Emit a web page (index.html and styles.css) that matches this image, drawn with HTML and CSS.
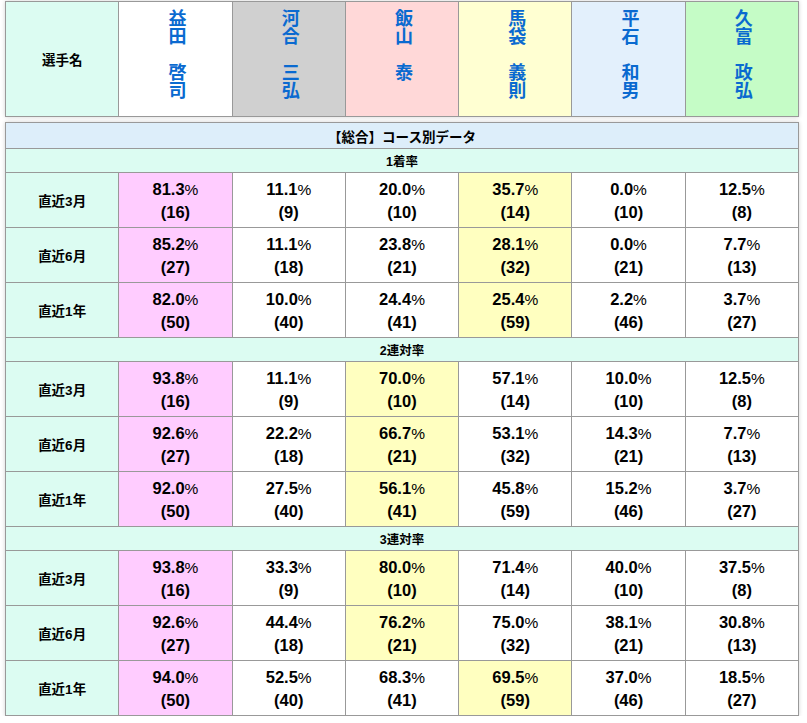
FILE: index.html
```html
<!DOCTYPE html>
<html lang="ja">
<head>
<meta charset="utf-8">
<title>コース別データ</title>
<link rel="stylesheet" href="styles.css">
</head>
<body>
<table class="players">
  <tr>
    <th class="label">選手名</th>
    <td class="name c-white"><a>益田　啓司</a></td>
    <td class="name c-gray"><a>河合　三弘</a></td>
    <td class="name c-pink"><a>飯山　泰</a></td>
    <td class="name c-yellow"><a>馬袋　義則</a></td>
    <td class="name c-blue"><a>平石　和男</a></td>
    <td class="name c-green"><a>久富　政弘</a></td>
  </tr>
</table>

<table class="data">
  <tr><th class="section" colspan="7">【総合】コース別データ</th></tr>
  <tr><th class="sub" colspan="7">1着率</th></tr>
  <tr><th class="label">直近3月</th>
    <td class="hl-pink">81.3<span class="pct">%</span><br>(16)</td>
    <td>11.1<span class="pct">%</span><br>(9)</td>
    <td>20.0<span class="pct">%</span><br>(10)</td>
    <td class="hl-yellow">35.7<span class="pct">%</span><br>(14)</td>
    <td>0.0<span class="pct">%</span><br>(10)</td>
    <td>12.5<span class="pct">%</span><br>(8)</td>
  </tr>
  <tr><th class="label">直近6月</th>
    <td class="hl-pink">85.2<span class="pct">%</span><br>(27)</td>
    <td>11.1<span class="pct">%</span><br>(18)</td>
    <td>23.8<span class="pct">%</span><br>(21)</td>
    <td class="hl-yellow">28.1<span class="pct">%</span><br>(32)</td>
    <td>0.0<span class="pct">%</span><br>(21)</td>
    <td>7.7<span class="pct">%</span><br>(13)</td>
  </tr>
  <tr><th class="label">直近1年</th>
    <td class="hl-pink">82.0<span class="pct">%</span><br>(50)</td>
    <td>10.0<span class="pct">%</span><br>(40)</td>
    <td>24.4<span class="pct">%</span><br>(41)</td>
    <td class="hl-yellow">25.4<span class="pct">%</span><br>(59)</td>
    <td>2.2<span class="pct">%</span><br>(46)</td>
    <td>3.7<span class="pct">%</span><br>(27)</td>
  </tr>
  <tr><th class="sub" colspan="7">2連対率</th></tr>
  <tr><th class="label">直近3月</th>
    <td class="hl-pink">93.8<span class="pct">%</span><br>(16)</td>
    <td>11.1<span class="pct">%</span><br>(9)</td>
    <td class="hl-yellow">70.0<span class="pct">%</span><br>(10)</td>
    <td>57.1<span class="pct">%</span><br>(14)</td>
    <td>10.0<span class="pct">%</span><br>(10)</td>
    <td>12.5<span class="pct">%</span><br>(8)</td>
  </tr>
  <tr><th class="label">直近6月</th>
    <td class="hl-pink">92.6<span class="pct">%</span><br>(27)</td>
    <td>22.2<span class="pct">%</span><br>(18)</td>
    <td class="hl-yellow">66.7<span class="pct">%</span><br>(21)</td>
    <td>53.1<span class="pct">%</span><br>(32)</td>
    <td>14.3<span class="pct">%</span><br>(21)</td>
    <td>7.7<span class="pct">%</span><br>(13)</td>
  </tr>
  <tr><th class="label">直近1年</th>
    <td class="hl-pink">92.0<span class="pct">%</span><br>(50)</td>
    <td>27.5<span class="pct">%</span><br>(40)</td>
    <td class="hl-yellow">56.1<span class="pct">%</span><br>(41)</td>
    <td>45.8<span class="pct">%</span><br>(59)</td>
    <td>15.2<span class="pct">%</span><br>(46)</td>
    <td>3.7<span class="pct">%</span><br>(27)</td>
  </tr>
  <tr><th class="sub" colspan="7">3連対率</th></tr>
  <tr><th class="label">直近3月</th>
    <td class="hl-pink">93.8<span class="pct">%</span><br>(16)</td>
    <td>33.3<span class="pct">%</span><br>(9)</td>
    <td class="hl-yellow">80.0<span class="pct">%</span><br>(10)</td>
    <td>71.4<span class="pct">%</span><br>(14)</td>
    <td>40.0<span class="pct">%</span><br>(10)</td>
    <td>37.5<span class="pct">%</span><br>(8)</td>
  </tr>
  <tr><th class="label">直近6月</th>
    <td class="hl-pink">92.6<span class="pct">%</span><br>(27)</td>
    <td>44.4<span class="pct">%</span><br>(18)</td>
    <td class="hl-yellow">76.2<span class="pct">%</span><br>(21)</td>
    <td>75.0<span class="pct">%</span><br>(32)</td>
    <td>38.1<span class="pct">%</span><br>(21)</td>
    <td>30.8<span class="pct">%</span><br>(13)</td>
  </tr>
  <tr><th class="label">直近1年</th>
    <td class="hl-pink">94.0<span class="pct">%</span><br>(50)</td>
    <td>52.5<span class="pct">%</span><br>(40)</td>
    <td>68.3<span class="pct">%</span><br>(41)</td>
    <td class="hl-yellow">69.5<span class="pct">%</span><br>(59)</td>
    <td>37.0<span class="pct">%</span><br>(46)</td>
    <td>18.5<span class="pct">%</span><br>(27)</td>
  </tr>
</table>
</body>
</html>
```

FILE: styles.css
```css
html, body {
  margin: 0;
  padding: 0;
  background: #ffffff;
}

body {
  padding: 1px 0 0 5px;
  font-family: "Liberation Sans", "Noto Sans CJK JP", sans-serif;
  color: #000;
}

table {
  border-collapse: collapse;
  width: 794px;
  table-layout: fixed;
  box-shadow: 0 0 4px rgba(0, 0, 0, 0.18);
}

th, td {
  border: 1px solid #999999;
  padding: 0;
  text-align: center;
}

.players {
  height: 116px;
}

.players .label {
  font-size: 13.5px;
  font-weight: bold;
  background: #dcfcf2;
  vertical-align: middle;
}

.name {
  vertical-align: top;
  padding-top: 7px;
}

.name a {
  display: inline-block;
  writing-mode: vertical-rl;
  text-orientation: upright;
  font-size: 18px;
  line-height: 22px;
  font-weight: bold;
  color: #0a6ad0;
  text-decoration: none;
}

.c-white { background: #ffffff; }
.c-gray { background: #d0d0d0; }
.c-pink { background: #ffd8d8; }
.c-yellow { background: #ffffd2; }
.c-blue { background: #e3f0fc; }
.c-green { background: #c5fcc6; }

.data {
  margin-top: 5px;
}

.section {
  height: 25px;
  background: #ddeefa;
  font-size: 13.5px;
  font-weight: bold;
}

.sub {
  height: 23px;
  background: #dcfcf2;
  font-size: 12.5px;
  font-weight: bold;
}

.data .label {
  height: 54px;
  background: #dcfcf2;
  font-size: 13.5px;
  font-weight: bold;
}

.data td {
  font-size: 16.5px;
  line-height: 22px;
  font-weight: bold;
  background: #ffffff;
  vertical-align: middle;
}

.data td.hl-pink { background: #ffccff; }
.data td.hl-yellow { background: #ffffc0; }

.pct {
  font-size: 15.5px;
  font-weight: normal;
}
```
